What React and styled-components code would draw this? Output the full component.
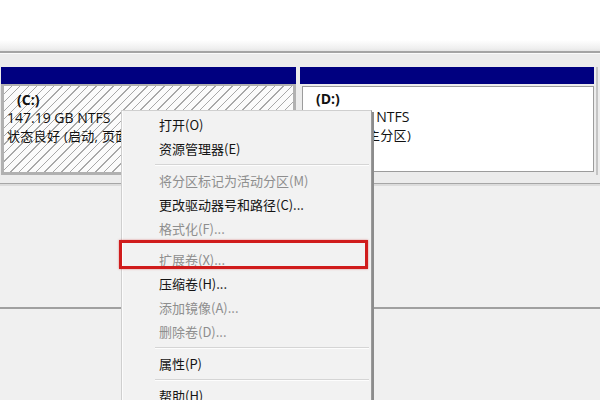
import React from "react";
import styled, { createGlobalStyle } from "styled-components";

const GlobalStyle = createGlobalStyle`
  html, body {
    margin: 0;
    padding: 0;
    background: #fff;
  }
  body {
    font-family: "Noto Sans CJK SC", "Noto Sans", sans-serif;
    font-size: 13px;
    color: #1a1a1a;
  }
`;

const menuItems = [
  { label: "打开(O)" },
  { label: "资源管理器(E)" },
  { sep: true },
  { label: "将分区标记为活动分区(M)", disabled: true },
  { label: "更改驱动器号和路径(C)..." },
  { label: "格式化(F)...", disabled: true },
  { label: "扩展卷(X)...", disabled: true, marked: true },
  { label: "压缩卷(H)..." },
  { label: "添加镜像(A)...", disabled: true },
  { label: "删除卷(D)...", disabled: true },
  { sep: true },
  { label: "属性(P)" },
  { sep: true },
  { label: "帮助(H)" },
];

const App = () => {
  return (
    <Page>
      <GlobalStyle />
      <TopSpace />
      <Rule />
      <DiskStrip>
        <Partition>
          <PartHeader />
          <PartBody hatched>
            <DriveName>(C:)</DriveName>
            <SizeLine>147.19 GB NTFS</SizeLine>
            <StatusLine>状态良好 (启动, 页面文件, 故障转储, 主分区)</StatusLine>
          </PartBody>
        </Partition>
        <Partition>
          <PartHeader />
          <PartBody>
            <DriveName>(D:)</DriveName>
            <SizeLine>318.32 GB NTFS</SizeLine>
            <StatusLine>状态良好 (主分区)</StatusLine>
          </PartBody>
        </Partition>
        <EdgeStrip />
      </DiskStrip>
      <Lower>
        <Pane />
        <Pane />
      </Lower>

      <Menu>
        {menuItems.map((item, i) =>
          item.sep ? (
            <Separator key={i} />
          ) : (
            <Item key={i} disabled={item.disabled} marked={item.marked}>
              {item.label}
              {item.marked && <Highlight />}
            </Item>
          )
        )}
      </Menu>
    </Page>
  );
};

const Page = styled.div`
  position: relative;
  width: 600px;
  height: 400px;
  overflow: hidden;
  background: #f0f0f0;
`;

const TopSpace = styled.div`
  height: 51px;
  background: linear-gradient(
    to bottom,
    #fff 0,
    #fff 40px,
    #f0f0f0 48px,
    #e6e6e6 51px
  );
`;

const Rule = styled.div`
  height: 2px;
  background: #a4a4a4;
  border-bottom: 1px solid #fafafa;
`;

const DiskStrip = styled.div`
  display: grid;
  grid-template-columns: 295px 294px 1fr;
  column-gap: 4px;
  padding: 13px 0 8px 1px;
  background: #ececec;
  border-bottom: 1px solid #a6a6a6;
`;

const Partition = styled.div`
  display: flex;
  flex-direction: column;
`;

const PartHeader = styled.div`
  height: 17px;
  background: #000080;
`;

const PartBody = styled.div`
  height: 81px;
  margin-top: ${(p) => (p.hatched ? "0" : "2px")};
  padding: ${(p) => (p.hatched ? "5px 0 0 3px" : "3px 0 0 3px")};
  border: ${(p) => (p.hatched ? "3px solid #b1b1b1" : "1px solid #9c9c9c")};
  border-top-width: ${(p) => (p.hatched ? "2px" : "1px")};
  margin-left: ${(p) => (p.hatched ? "0" : "2px")};
  background: ${(p) =>
    p.hatched
      ? "repeating-linear-gradient(135deg, #fbfbfb 0 5px, #a8a8a8 5px 6px)"
      : "#fff"};
  overflow: hidden;
  white-space: nowrap;
  font-size: 14px;
  line-height: 18px;
  font-family: "Open Sans", "Noto Sans CJK SC", sans-serif;
  color: #111;
`;

const DriveName = styled.div`
  font-weight: bold;
  padding-left: 10px;
`;

const SizeLine = styled.div`
  font-size: 14px;
`;

const StatusLine = styled.div`
  font-size: 13px;
  letter-spacing: 0.3px;
`;

const EdgeStrip = styled.div`
  border-left: 2px solid #c4c4c4;
  margin: 0 0 0 -2px;
`;

const Lower = styled.div`
  border-top: 2px solid #dcdcdc;
`;

const Pane = styled.div`
  height: 121px;
  border-bottom: 2px solid #a0a0a0;
  background: #f0f0f0;
`;

const Menu = styled.div`
  position: absolute;
  left: 121px;
  top: 110px;
  width: 249px;
  padding: 2px 0 4px;
  background: #f2f2f2;
  border: 1px solid #cfcfcf;
  border-right: 1px solid #9a9a9a;
  box-shadow: inset 1px 0 0 #fcfcfc, 2px 2px 0 #8c8c8c;
`;

const Item = styled.div`
  position: relative;
  height: 24px;
  line-height: 24px;
  padding-left: 37px;
  margin-top: ${(p) => (p.marked ? "7px" : "0")};
  color: ${(p) => (p.disabled ? "#8e8e8e" : "#141414")};
  white-space: nowrap;
`;

const Highlight = styled.div`
  position: absolute;
  left: -3px;
  top: -8px;
  width: 243px;
  height: 23px;
  border: 3px solid #d01c1c;
  box-shadow: 0 0 2px rgba(200, 30, 30, 0.5);
`;

const Separator = styled.div`
  height: 8px;
  margin: 0 2px 0 33px;
  display: flex;
  align-items: center;
  &::before {
    content: "";
    flex: 1;
    height: 1px;
    background: #d5d5d5;
    border-bottom: 1px solid #fdfdfd;
  }
`;

export default App;
